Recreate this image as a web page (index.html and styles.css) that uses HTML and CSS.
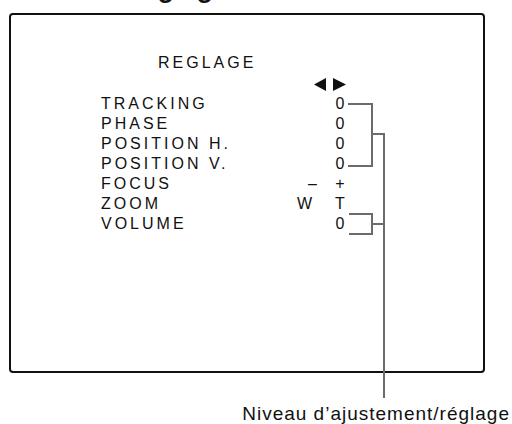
FILE: index.html
```html
<!DOCTYPE html>
<html lang="fr">
<head>
<meta charset="utf-8">
<title>Réglage</title>
<link rel="stylesheet" href="styles.css">
</head>
<body>
<div class="page">
  <h1 class="title">Réglage</h1>
  <div class="screen">
    <div class="menu-title">REGLAGE</div>
    <div class="arrow-row">
      <svg class="arrows" width="34" height="14" viewBox="0 0 34 14" aria-hidden="true">
        <polygon points="0,6.5 12,0 12,13" fill="#111"/>
        <polygon points="19,0 19,13 32,6.5" fill="#111"/>
      </svg>
    </div>
    <div class="menu">
      <div class="label">TRACKING</div><div class="a"></div><div class="b">0</div>
      <div class="label">PHASE</div><div class="a"></div><div class="b">0</div>
      <div class="label">POSITION H.</div><div class="a"></div><div class="b">0</div>
      <div class="label">POSITION V.</div><div class="a"></div><div class="b">0</div>
      <div class="label">FOCUS</div><div class="a dash">–</div><div class="b">+</div>
      <div class="label">ZOOM</div><div class="a">W</div><div class="b">T</div>
      <div class="label">VOLUME</div><div class="a"></div><div class="b">0</div>
    </div>
  </div>
  <p class="caption">Niveau d’ajustement/réglage</p>
  <svg class="leaders" width="512" height="424" viewBox="0 0 512 424" aria-hidden="true">
    <g fill="none" stroke="#6b6b6b" stroke-width="2">
      <path d="M348 104 H372 V166 H348"/>
      <path d="M372 134 H384"/>
      <path d="M349 214 H372 V234 H349"/>
      <path d="M372 224 H384"/>
      <path d="M384 133 V398"/>
    </g>
  </svg>
</div>
</body>
</html>
```

FILE: styles.css
```css
html, body {
  margin: 0;
  padding: 0;
  background: #fff;
}

body {
  width: 512px;
  height: 424px;
  overflow: hidden;
  font-family: "Liberation Sans", Arial, sans-serif;
  color: #111;
}

.page {
  position: relative;
  display: flow-root;
  width: 512px;
  height: 424px;
}

.title {
  margin: -25px 0 0 123px;
  font-size: 27px;
  line-height: 27px;
  font-weight: bold;
  height: 27px;
}

.screen {
  margin: 11px 0 0 9px;
  width: 476px;
  height: 360px;
  box-sizing: border-box;
  border: 2px solid #111;
  border-radius: 4px;
  padding: 38px 0 0 90px;
}

.menu-title {
  margin-left: 57px;
  font-size: 16px;
  line-height: 20px;
  letter-spacing: 3px;
}

.arrow-row {
  display: flex;
  justify-content: flex-end;
  width: 247px;
  height: 21px;
  padding-top: 5px;
  box-sizing: border-box;
}

.arrows {
  display: block;
  width: 34px;
  height: 14px;
}

.menu {
  display: grid;
  grid-template-columns: 195px 37px 14px;
  grid-auto-rows: 20px;
  font-size: 16px;
  line-height: 20px;
}

.label {
  letter-spacing: 3px;
  white-space: nowrap;
}

.a {
  text-align: left;
  padding-left: 1px;
}

.a.dash {
  padding-left: 12px;
}

.b {
  text-align: center;
}

.caption {
  margin: 31px 0 0 0;
  padding-right: 2px;
  text-align: right;
  font-size: 19px;
  line-height: 20px;
  letter-spacing: 1px;
  white-space: nowrap;
}

.leaders {
  position: absolute;
  left: 0;
  top: 0;
  pointer-events: none;
}
```
